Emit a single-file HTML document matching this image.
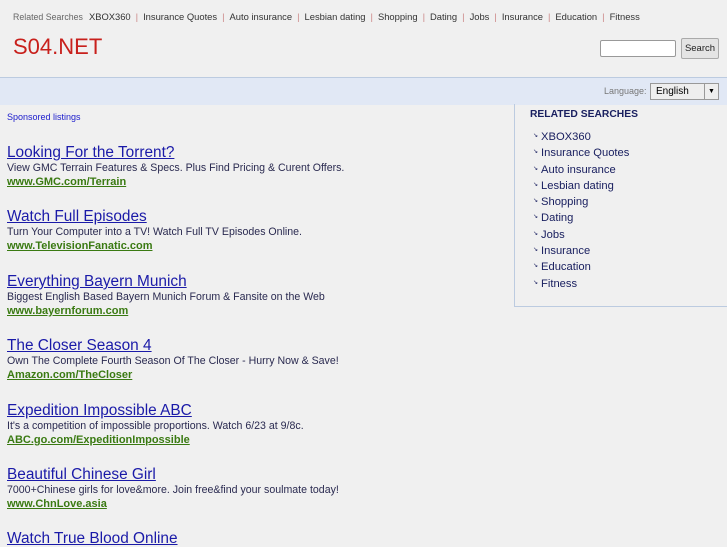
<!DOCTYPE html>
<html><head><style>
body{margin:0;width:727px;height:545px;overflow:hidden;background:#f0f0f0;font-family:"Liberation Sans",sans-serif;position:relative}
.top{position:absolute;left:13px;top:11px;font-size:9.4px;color:#333;white-space:nowrap}
.top span.l{color:#666;font-size:8.8px;margin-right:6px}
.top a{color:#333;text-decoration:none}
.top i{color:#c88;font-style:normal;margin:0 5px}
.logo{position:absolute;left:13px;top:34px;font-size:22px;color:#c8201c}
.sinp{position:absolute;left:600px;top:40px;width:74px;height:15px;background:#fff;border:1px solid #999;border-radius:2px}
.sbtn{position:absolute;left:681px;top:38px;width:36px;height:19px;background:#e4e4e4;border:1px solid #aaa;border-radius:2px;font-size:9.5px;line-height:19px;text-align:center;color:#222}
.band{position:absolute;left:0;top:77px;width:727px;height:27px;background:#e1e8f5;border-top:1px solid #bccbe0}
.lang{position:absolute;left:604px;top:86px;font-size:9px;color:#777}
.sel{position:absolute;left:650px;top:83px;height:15px;background:#eee;border:1px solid #999;font-size:10px;line-height:15px;padding-left:5px;width:62px}
.sel b{position:absolute;right:0;top:0;width:13px;height:15px;border-left:1px solid #999;font-size:7px;text-align:center;font-weight:normal}
.side{position:absolute;left:514px;top:104px;width:213px;height:202px;border-left:1px solid #bccbe0;border-bottom:1px solid #bccbe0}
.side h4{margin:0;position:absolute;left:15px;top:5px;font-size:10.3px;color:#1a2060}
.side ul{list-style:none;margin:0;padding:0;position:absolute;left:18px;top:24px}
.side li{font-size:11.2px;color:#1a2060;height:16.3px;line-height:16px}
.side li:before{content:"\2198";font-size:6px;margin-right:3px;vertical-align:3px}
.sp{position:absolute;left:7px;top:112px;font-size:9px;color:#1a1acc}
.ad{position:absolute;left:7px}
.ad .t{font-size:15.4px;color:#1a1aa8;text-decoration:underline;line-height:17px}
.ad .d{font-size:10.6px;color:#2a2a50;line-height:14px}
.ad .u{font-size:11px;color:#3a7a12;font-weight:bold;text-decoration:underline;line-height:14px}
</style></head><body>
<div class="top"><span class="l">Related Searches</span><a>XBOX360</a><i>|</i><a>Insurance Quotes</a><i>|</i><a>Auto insurance</a><i>|</i><a>Lesbian dating</a><i>|</i><a>Shopping</a><i>|</i><a>Dating</a><i>|</i><a>Jobs</a><i>|</i><a>Insurance</a><i>|</i><a>Education</a><i>|</i><a>Fitness</a></div>
<div class="logo">S04.NET</div>
<div class="sinp"></div><div class="sbtn">Search</div>
<div class="band"></div>
<div class="lang">Language:</div>
<div class="sel">English<b>▼</b></div>
<div class="side"><h4>RELATED SEARCHES</h4><ul>
<li>XBOX360</li><li>Insurance Quotes</li><li>Auto insurance</li><li>Lesbian dating</li><li>Shopping</li><li>Dating</li><li>Jobs</li><li>Insurance</li><li>Education</li><li>Fitness</li></ul></div>
<div class="sp">Sponsored listings</div>
<div class="ad" style="top:144px"><div class="t">Looking For the Torrent?</div><div class="d">View GMC Terrain Features &amp; Specs. Plus Find Pricing &amp; Curent Offers.</div><div class="u">www.GMC.com/Terrain</div></div>
<div class="ad" style="top:208px"><div class="t">Watch Full Episodes</div><div class="d">Turn Your Computer into a TV! Watch Full TV Episodes Online.</div><div class="u">www.TelevisionFanatic.com</div></div>
<div class="ad" style="top:273px"><div class="t">Everything Bayern Munich</div><div class="d">Biggest English Based Bayern Munich Forum &amp; Fansite on the Web</div><div class="u">www.bayernforum.com</div></div>
<div class="ad" style="top:337px"><div class="t">The Closer Season 4</div><div class="d">Own The Complete Fourth Season Of The Closer - Hurry Now &amp; Save!</div><div class="u">Amazon.com/TheCloser</div></div>
<div class="ad" style="top:402px"><div class="t">Expedition Impossible ABC</div><div class="d">It's a competition of impossible proportions. Watch 6/23 at 9/8c.</div><div class="u">ABC.go.com/ExpeditionImpossible</div></div>
<div class="ad" style="top:466px"><div class="t">Beautiful Chinese Girl</div><div class="d">7000+Chinese girls for love&amp;more. Join free&amp;find your soulmate today!</div><div class="u">www.ChnLove.asia</div></div>
<div class="ad" style="top:530px"><div class="t">Watch True Blood Online</div></div>
</body></html>
